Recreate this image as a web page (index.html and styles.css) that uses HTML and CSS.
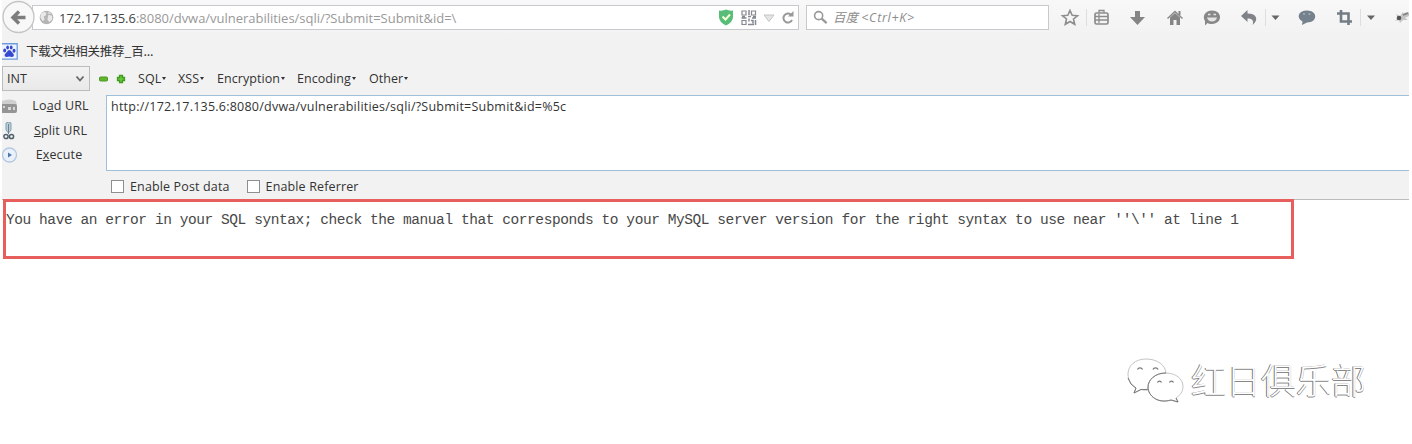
FILE: index.html
```
<!DOCTYPE html>
<html lang="zh">
<head>
<meta charset="utf-8">
<title>SQL Injection</title>
<link rel="stylesheet" href="styles.css">
</head>
<body>
<header class="chrome">
  <div class="nav">
    <svg class="back" viewBox="0 0 34 35"><circle cx="16.5" cy="17" r="15.5" fill="#f8f8f8" stroke="#c4c4c4" stroke-width="1.3"/><path d="M11 17.500H23.500M17 11.500L11 17.500L17 23.500" fill="none" stroke="#7d7d7d" stroke-width="3.500"/></svg>
    <div class="address">
      <svg class="globe" viewBox="0 0 16 16"><circle cx="8" cy="8" r="7.300" fill="#b5b5b5"/><path d="M2 4L5 2L8 3L7 6L5 7L6 10L4 12L1.500 8ZM10 5L14 6L14 10L11 13L9 10ZM10 1.500L13 4L10 4Z" fill="#e9e9e9"/></svg>
      <span class="url"><b>172.17.135.6</b>:8080/dvwa/vulnerabilities/sqli/?Submit=Submit&amp;id=\</span>
      <svg class="addricons" viewBox="0 0 80 24">
        <path d="M1 4.500Q5 5 8 3.500Q11 5 15 4.500V11Q15 16 8 19.500Q1 16 1 11Z" fill="#58bd78"/><path d="M4.500 10.500L7.500 13.500L12 8.500" fill="none" stroke="#f4ffd8" stroke-width="2"/>
        <g fill="none" stroke="#858991" stroke-width="1.200"><path d="M24 5h4v4h-4zM33.500 5h4v4h-4zM24 14.500h4v4h-4z"/><path d="M31 4v5M30 10.500h3M23.500 12h5M31 12.500v3M34 12h4M33 14.500h2v3M37.500 14v5M30 18.500h6M24 10.500h3M35 10.500h3" stroke-width="1.500"/></g>
        <path d="M46 9H56L51 15.500Z" fill="#e5e5e5" stroke="#c3c3c3"/>
        <path d="M73 8.700A4.500 4.500 0 1 0 74 14" fill="none" stroke="#999" stroke-width="2"/><path d="M70 10.500H75.500V5Z" fill="#999"/>
      </svg>
    </div>
    <div class="search">
      <svg viewBox="0 0 16 16"><circle cx="6" cy="6" r="4.300" fill="none" stroke="#999" stroke-width="1.700"/><path d="M9 9L14.500 14" stroke="#999" stroke-width="2.400"/></svg>
      <span>百度 <em>&lt;Ctrl+K&gt;</em></span>
    </div>
    <svg class="tools" viewBox="1048 0 361 35">
      <path d="M1070 10.500L1072.200 15.300L1077.500 15.800L1073.500 19L1074.700 24.300L1070 21.500L1065.300 24.300L1066.500 19L1062.500 15.800L1067.800 15.300Z" fill="none" stroke="#8d8d8d" stroke-width="1.600"/>
      <path d="M1086.500 9V26M1265.500 9V26M1360.500 9V26" stroke="#dedede"/>
      <rect x="1095" y="13" width="13" height="11" rx="1.500" fill="none" stroke="#8c8c8c" stroke-width="1.700"/><path d="M1099 13V10.500H1104V13M1095 16.500H1108M1095 20H1108M1099 14V23" fill="none" stroke="#8c8c8c" stroke-width="1.300"/>
      <path d="M1135 11H1140V17H1145L1137.500 25L1130 17H1135Z" fill="#858585"/>
      <path d="M1167.500 18.500L1175 11.500L1182.500 18.500" fill="none" stroke="#8c8c8c" stroke-width="1.600"/><path d="M1170 17.500L1175 13L1180 17.500V25H1176.500V20H1173.500V25H1170Z" fill="#858585"/><path d="M1178.500 11h2v4h-2z" fill="#858585"/>
      <path d="M1212 10.500C1222.500 10.500 1223 23.500 1212 24C1210 24 1208.500 23.700 1207.500 23L1205 25.500V21C1202 16.500 1205 10.500 1212 10.500Z" fill="#888"/><path d="M1207 17.500H1217Q1216 21.500 1212 21.500T1207 17.500Z" fill="#e4e4e4"/><path d="M1208 14.500h2.500M1213.500 14.500h2.500" stroke="#e4e4e4" stroke-width="1.700"/>
      <path d="M1241 16L1247.500 10V13.500C1257 13.500 1259 20 1252.500 25C1254.500 20 1251.500 18.500 1247.500 18.500V22Z" fill="#7f8388"/>
      <path d="M1271.500 15.500H1279.500L1275.500 20ZM1367 15.500H1375L1371 20Z" fill="#666"/>
      <path d="M1307 10.500C1318 10.500 1318 22.500 1307 22.500L1302 25L1302.500 21.500C1296 18 1298 10.500 1307 10.500Z" fill="#75818d"/><circle cx="1304" cy="14" r="1" fill="#a5b0ba"/><circle cx="1309.500" cy="14" r="1" fill="#a5b0ba"/>
      <path d="M1341 10V21.500H1352M1337 13.500H1348.500V25" fill="none" stroke="#747d85" stroke-width="2.600"/>
      <path d="M1396 14L1400 16L1403 12L1404 16L1409 12V16L1405 18L1408 20L1403 20L1400 23L1399 20L1395 21L1398 18Z" fill="#c4c4c4"/><circle cx="1399" cy="18" r="2.300" fill="#555"/><path d="M1403 15L1408 13" stroke="#888" stroke-width="2"/>
    </svg>
  </div>

  <div class="bookmarks">
    <svg viewBox="0 0 16 17"><path d="M-1 .75H15.200V16.200H-1" fill="#eef4ff" stroke="#6c9bdc" stroke-width="1.300"/><g fill="#3548cf"><ellipse cx="2.700" cy="7.500" rx="1.500" ry="2"/><ellipse cx="5.600" cy="4.500" rx="1.400" ry="2"/><ellipse cx="9.200" cy="4.500" rx="1.400" ry="2"/><ellipse cx="12" cy="7.700" rx="1.500" ry="2"/><path d="M7.300 7C9 7 10 9.500 11.500 11C13 14 10 14.500 7.300 13.500C4.500 14.500 1.500 14 3 11C5 9.500 5.500 7 7.300 7Z"/></g></svg>
    <span>下载文档相关推荐_百...</span>
  </div>

  <div class="hackmenu">
    <div class="select"><span>INT</span><svg viewBox="0 0 10 8"><path d="M1.500 1.500L5 5.500L8.500 1.500" fill="none" stroke="#666" stroke-width="1.800"/></svg></div>
    <svg class="plusminus" viewBox="0 0 28 12"><rect x=".5" y="4" width="8" height="4" rx="1" fill="#63b52c" stroke="#489b22"/><path d="M20.500 2.500h3v2h2v3h-2v2h-3v-2h-2v-3h2z" fill="#6cc63e" stroke="#3f9c1f" stroke-width="1.300"/></svg>
    <span class="m1">SQL<i></i></span><span class="m2">XSS<i></i></span><span class="m3">Encryption<i></i></span><span class="m4">Encoding<i></i></span><span class="m5">Other<i></i></span>
  </div>

  <div class="hackbar">
    <div class="actions">
      <div class="action"><svg viewBox="0 0 18 18"><path d="M0 4Q8 1 14 4L15 8H0Z" fill="#cfcfcf"/><rect x="-1" y="7" width="16" height="9" rx="2" fill="#949494"/><path d="M1 9h2v2H1zM6 10h3v3H6zM11 10h2v3h-2z" fill="#d8d8d8"/></svg><span>Lo<u>a</u>d URL</span></div>
      <div class="action"><svg viewBox="0 0 18 18"><path d="M4 1Q7 -1 9 1V8L6.500 11L4 8Z" fill="#b9cfda" stroke="#849dab"/><path d="M6.500 2V12" stroke="#6b8290"/><circle cx="4" cy="14.500" r="2.100" fill="none" stroke="#50616b" stroke-width="1.500"/><circle cx="9.500" cy="14.500" r="2.100" fill="none" stroke="#50616b" stroke-width="1.500"/></svg><span><u>S</u>plit URL</span></div>
      <div class="action"><svg viewBox="0 0 18 18"><circle cx="7.500" cy="9" r="7" fill="#e9f1fa" stroke="#b4c8df" stroke-width="1.300"/><path d="M6 6.500L10 9L6 11.500Z" fill="#4e78b0"/></svg><span class="exec">E<u>x</u>ecute</span></div>
    </div>
    <div class="editor"><span>http://172.17.135.6:8080/dvwa/vulnerabilities/sqli/?Submit=Submit&amp;id=%5c</span></div>
  </div>
  <div class="checks">
    <label><i class="box"></i><span>Enable Post data</span></label>
    <label><i class="box"></i><span>Enable Referrer</span></label>
  </div>
</header>
<main>
  <div class="error">You have an error in your SQL syntax; check the manual that corresponds to your MySQL server version for the right syntax to use near ''\'' at line 1</div>
  <div class="watermark">
    <svg viewBox="0 0 60 54"><g fill="#fff" stroke="#777" stroke-width="1"><path d="M20 5C9 5 2 12 2 20C2 26 5 31 10 34L8 39L15 35.500C35 39 40 30 40 20C40 11 31 5 20 5Z" stroke="#c4c4c4"/><path d="M2 24Q4 31 10 34L8 39L15 35.500Q19 36 23 35" fill="none"/><path d="M39 19C29 19 22 26 22 33C22 42 32 50 45 46L52 48L50 44C56 40 58 35 56.500 29C54 22 47 19 39 19Z" stroke="#c4c4c4"/><path d="M40 19C29 19 22 26 22 33C22 42 32 50 45 46L52 48L50 44" fill="none"/><path d="M11.500 15.500a2.700 2.700 0 0 1 5 0M27 15.500a2.700 2.700 0 0 1 5 0M31.500 28.500a2.200 2.200 0 0 1 4 0M43.500 28.500a2.200 2.200 0 0 1 4 0" stroke-width="1.300"/></g></svg>
    <span>红日俱乐部</span>
  </div>
</main>
</body>
</html>
```

FILE: styles.css
```
* { box-sizing: border-box; }
body { margin: 0; width: 1412px; height: 444px; overflow: hidden; background: #fff; font: 12.5px/18px "Open Sans", "Noto Sans CJK SC", sans-serif; color: #333; }
svg { display: block; flex: none; }
span { white-space: nowrap; }
.chrome { margin-left: 2px; width: 1407px; height: 200px; background: #f2f2f2; border-bottom: 1px solid #bcbcbc; }
.nav { display: flex; height: 36px; background: linear-gradient(#f8f8f8, #f2f2f2); }
.back { width: 34px; height: 35px; z-index: 1; }
.address { display: flex; align-items: center; width: 767px; height: 25px; margin: 5px 7px 0 -4px; padding-left: 6px; border: 1px solid #c6cacd; background: #fff; }
.globe { width: 15px; height: 15px; margin-right: 5px; }
.url { color: #999; width: 661px; font-size: 13px; letter-spacing: -.02px; }
.url b { color: #444; font-weight: 500; }
.addricons { width: 80px; height: 24px; }
.search { display: flex; align-items: center; width: 243px; height: 25px; margin-top: 5px; padding-left: 6px; border: 1px solid #c6cacd; background: #fff; color: #8c8c8c; font-style: italic; }
.search svg { width: 15px; height: 15px; margin-right: 5px; }
.search em { letter-spacing: .7px; }
.tools { width: 361px; height: 35px; margin-left: -1px; }
.bookmarks { display: flex; align-items: center; height: 30px; gap: 8px; }
.bookmarks svg { width: 16px; height: 17px; }
.bookmarks span { font-family: "Noto Sans CJK SC", sans-serif; letter-spacing: -.2px; }
.hackmenu { display: flex; align-items: center; height: 25px; }
.select { display: flex; align-items: center; justify-content: space-between; width: 88px; height: 25px; padding: 0 4px; border: 1px solid #bcbcbc; background: linear-gradient(#f2f2f2, #e9e9e9); }
.select svg { width: 10px; height: 8px; }
.plusminus { width: 28px; height: 12px; margin: 0 11px 0 9px; }
.hackmenu > span { display: flex; align-items: center; letter-spacing: .05px; }
.hackmenu i { width: 0; height: 0; margin: 0 0 0 1px; border: 2px solid transparent; border-top: 3px solid #333; border-bottom: 0; }
.m1 { width: 40px; } .m2 { width: 39px; } .m3 { width: 80px; } .m4 { width: 72px; }
.hackbar { display: flex; height: 80px; padding-top: 4px; }
.actions { display: flex; flex-direction: column; width: 104px; margin-top: -1px; }
.action { display: flex; align-items: center; height: 24.5px; }
.action svg { width: 18px; height: 18px; }
.action span { width: 81px; text-align: center; letter-spacing: .15px; }
.action .exec { width: 78px; }
u { text-underline-offset: 1px; }
.editor { width: 1303px; height: 76px; padding: 2px 4px; border: 1px solid #9fc0da; border-right: 0; background: #fff; letter-spacing: .23px; }
.checks { display: flex; gap: 17px; padding: 6px 0 0 109px; }
.checks label { display: flex; align-items: center; height: 19px; gap: 6px; letter-spacing: .14px; }
.box { width: 13px; height: 13px; border: 1px solid #8f8f8f; background: #fff; }
main { display: flex; flex-direction: column; }
.error { position: relative; z-index: 1; width: 1291px; height: 60px; margin: -1px 0 0 3px; padding: 9px 0 0; border: 3px solid #e65f5d; font: 14.5px/18px "Liberation Mono", monospace; letter-spacing: -.43px; white-space: pre; color: #484848; }
.watermark { display: flex; align-items: flex-start; margin: 95px 0 0 1126px; gap: 5px; }
.watermark svg { width: 60px; height: 54px; }
.watermark span { font: 300 35px/50px "Noto Sans CJK SC", sans-serif; color: #fff; text-shadow: -1px 0 0 #777, 0 1px 0 #888; }
```
